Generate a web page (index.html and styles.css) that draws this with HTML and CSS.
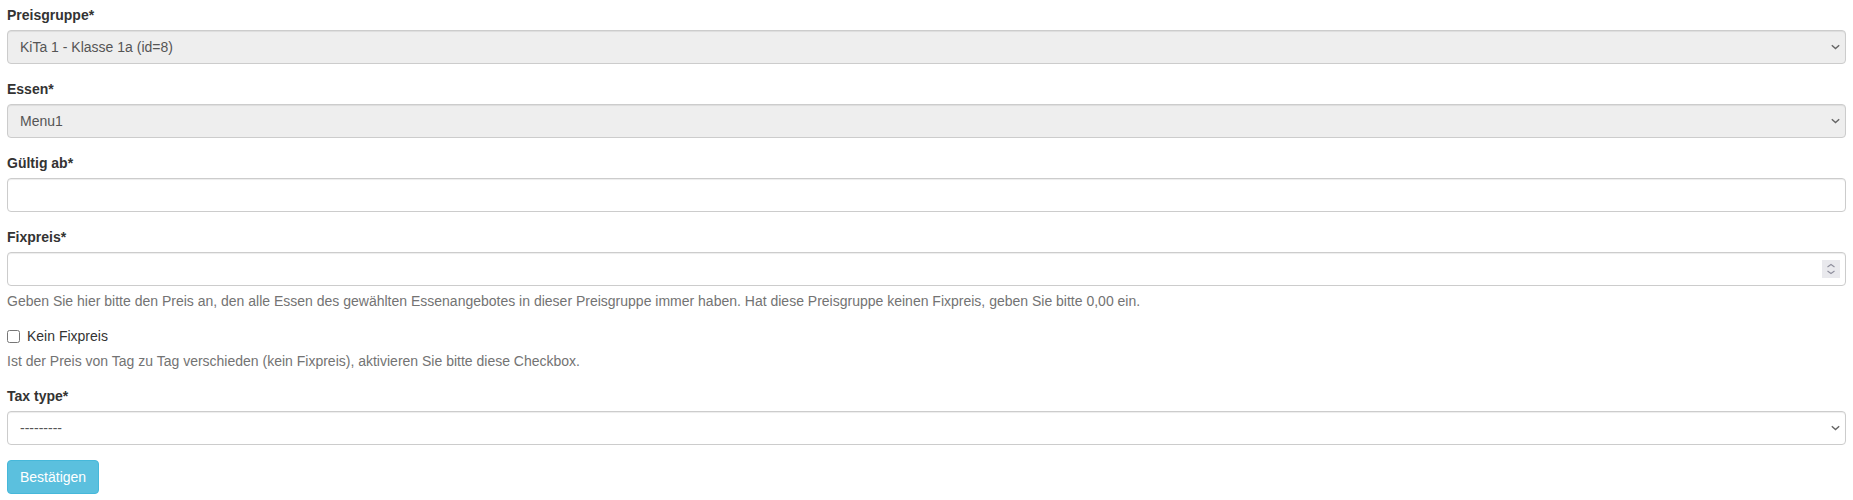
FILE: index.html
```html
<!DOCTYPE html>
<html lang="de">
<head>
<meta charset="utf-8">
<title>Preis</title>
<link rel="stylesheet" href="styles.css">
</head>
<body>
<form class="form">
  <div class="form-group">
    <label class="control-label" for="pg">Preisgruppe*</label>
    <select id="pg" class="form-control select readonly">
      <option>KiTa 1 - Klasse 1a (id=8)</option>
    </select>
  </div>
  <div class="form-group">
    <label class="control-label" for="es">Essen*</label>
    <select id="es" class="form-control select readonly">
      <option>Menu1</option>
    </select>
  </div>
  <div class="form-group">
    <label class="control-label" for="ga">Gültig ab*</label>
    <input id="ga" class="form-control" type="text">
  </div>
  <div class="form-group">
    <label class="control-label" for="fp">Fixpreis*</label>
    <div class="number-wrap">
      <input id="fp" class="form-control number" type="number" step="0.01">
      <span class="spinner" aria-hidden="true">
        <svg width="18" height="18" viewBox="0 0 18 18">
          <path d="M5.5 7 L9 4.5 L12.5 7" fill="none" stroke="#8f8f9d" stroke-width="1.1"/>
          <path d="M5.5 11 L9 13.5 L12.5 11" fill="none" stroke="#8f8f9d" stroke-width="1.1"/>
        </svg>
      </span>
    </div>
    <p class="help-block">Geben Sie hier bitte den Preis an, den alle Essen des gewählten Essenangebotes in dieser Preisgruppe immer haben. Hat diese Preisgruppe keinen Fixpreis, geben Sie bitte 0,00 ein.</p>
  </div>
  <div class="form-group">
    <div class="checkbox">
      <label><input type="checkbox" class="check"> Kein Fixpreis</label>
    </div>
    <p class="help-block">Ist der Preis von Tag zu Tag verschieden (kein Fixpreis), aktivieren Sie bitte diese Checkbox.</p>
  </div>
  <div class="form-group">
    <label class="control-label" for="tt">Tax type*</label>
    <select id="tt" class="form-control select">
      <option>---------</option>
    </select>
  </div>
  <button type="button" class="btn btn-info">Bestätigen</button>
</form>
</body>
</html>
```
FILE: styles.css
```css
* { box-sizing: border-box; }
html, body {
  margin: 0;
  background: #fff;
}
body {
  font-family: "Liberation Sans", Arial, sans-serif;
  font-size: 14px;
  line-height: 20px;
  color: #333;
}
.form {
  padding: 5px 7px 0 7px;
}
.form-group {
  margin-bottom: 15px;
}
.control-label {
  display: inline-block;
  max-width: 100%;
  margin-bottom: 5px;
  font-weight: bold;
}
.form-control {
  display: block;
  width: 100%;
  height: 34px;
  padding: 6px 12px;
  font-family: inherit;
  font-size: 14px;
  line-height: 20px;
  color: #555;
  background-color: #fff;
  border: 1px solid #ccc;
  border-radius: 4px;
  box-shadow: inset 0 1px 1px rgba(0,0,0,.075);
  margin: 0;
}
.select {
  -webkit-appearance: none;
  appearance: none;
  padding-right: 24px;
  background-image: url("data:image/svg+xml;utf8,<svg xmlns='http://www.w3.org/2000/svg' width='9' height='6' viewBox='0 0 9 6'><path d='M0.8 1.2 L4.5 4.6 L8.2 1.2' fill='none' stroke='%23666' stroke-width='1.4'/></svg>");
  background-repeat: no-repeat;
  background-position: right 5px center;
  background-size: 9px 6px;
}
.form-control.readonly {
  background-color: #eee;
}
.number-wrap {
  position: relative;
}
.number {
  -moz-appearance: textfield;
}
.number::-webkit-inner-spin-button,
.number::-webkit-outer-spin-button {
  -webkit-appearance: none;
  margin: 0;
}
.spinner {
  position: absolute;
  right: 6px;
  top: 8px;
  width: 18px;
  height: 18px;
  background: #e9e9ed;
  display: flex;
}
.help-block {
  display: block;
  margin: 5px 0 10px;
  color: #737373;
}
.checkbox {
  position: relative;
  display: block;
  margin: 0;
}
.checkbox label {
  display: block;
  min-height: 20px;
  padding-left: 20px;
  font-weight: normal;
  cursor: pointer;
}
.checkbox .check {
  position: absolute;
  margin: 4px 0 0 -20px;
  width: 13px;
  height: 13px;
}
.btn {
  display: inline-block;
  padding: 6px 12px;
  font-family: inherit;
  font-size: 14px;
  line-height: 20px;
  border: 1px solid transparent;
  border-radius: 4px;
  cursor: pointer;
}
.btn-info {
  color: #fff;
  background-color: #5bc0de;
  border-color: #46b8da;
}
```
